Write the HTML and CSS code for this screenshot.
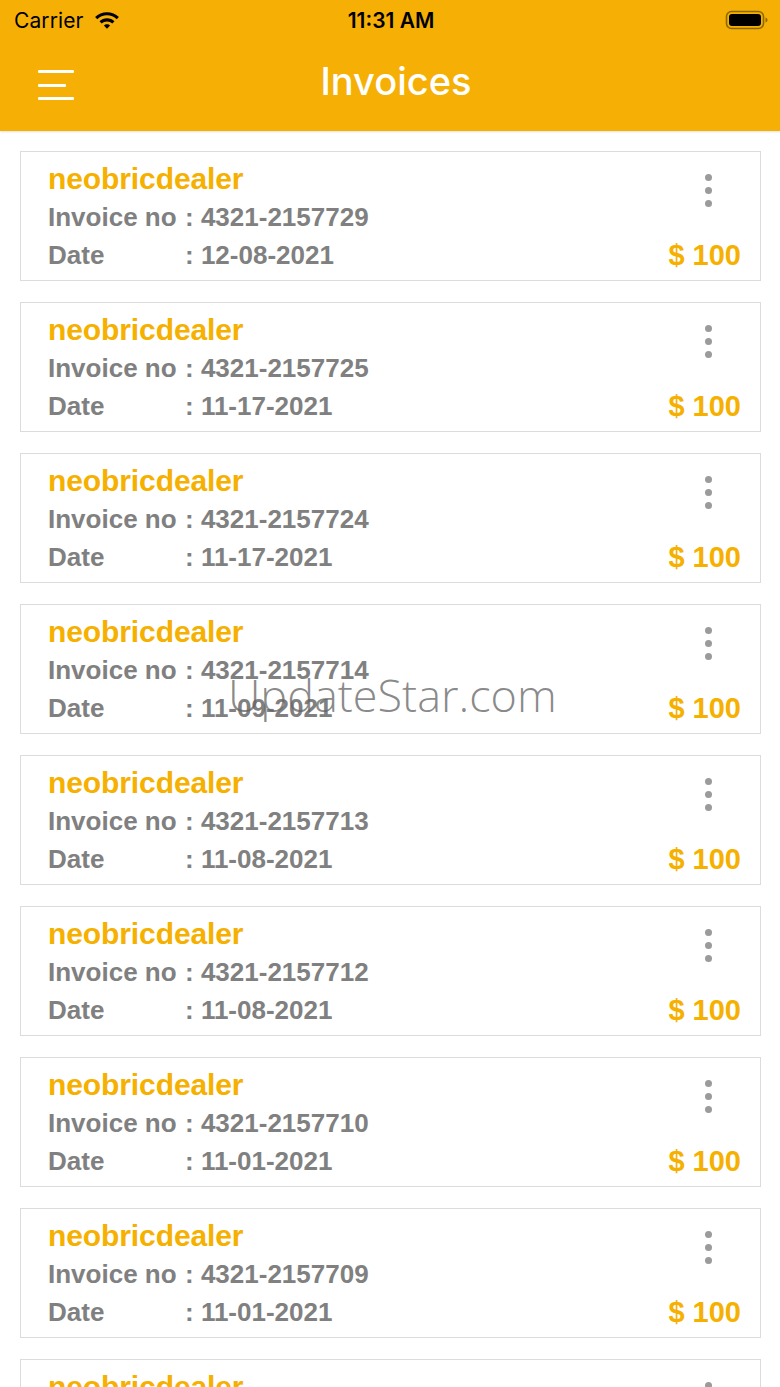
FILE: index.html
```html
<!DOCTYPE html>
<html lang="en">
<head>
<meta charset="utf-8">
<title>Invoices</title>
<link rel="stylesheet" href="styles.css">
</head>
<body>
<div class="screen">
  <header class="topbar">
    <div class="status">
      <div class="status-left">
        <span class="carrier">Carrier</span>
        <svg class="wifi" width="28" height="20" viewBox="0 0 28 20">
          <path d="M14 3.2c4.6 0 8.8 1.8 11.9 4.8l-2.2 2.3C21.2 7.8 17.8 6.3 14 6.3S6.8 7.8 4.3 10.3L2.1 8C5.2 5 9.4 3.2 14 3.2z" fill="#000"/>
          <path d="M14 9.3c2.9 0 5.5 1.1 7.5 3l-2.2 2.3c-1.4-1.3-3.2-2.1-5.3-2.1s-3.9.8-5.3 2.1L6.5 12.3c2-1.9 4.6-3 7.5-3z" fill="#000"/>
          <path d="M14 15.3c1.2 0 2.3.5 3.1 1.2L14 19.7l-3.1-3.2c.8-.7 1.9-1.2 3.1-1.2z" fill="#000"/>
        </svg>
      </div>
      <div class="clock">11:31 AM</div>
      <div class="status-right">
        <svg class="battery" width="44" height="22" viewBox="0 0 44 22">
          <rect x="1.5" y="2.5" width="37" height="17" rx="5" fill="none" stroke="#8a6a00" stroke-width="1.6"/>
          <rect x="4" y="5" width="32" height="12" rx="3" fill="#000"/>
          <path d="M40.5 8.5c1.4.4 2 1.3 2 2.5s-.6 2.1-2 2.5z" fill="#8a6a00"/>
        </svg>
      </div>
    </div>
    <nav class="navbar">
      <button class="menu" aria-label="Menu">
        <span class="bar long"></span>
        <span class="bar short"></span>
        <span class="bar long"></span>
      </button>
      <h1 class="title">Invoices</h1>
    </nav>
  </header>

  <main class="list">
    <div class="card">
      <div class="info">
        <div class="name">neobricdealer</div>
        <div class="row"><span class="label">Invoice no</span><span class="value">: 4321-2157729</span></div>
        <div class="row"><span class="label">Date</span><span class="value">: 12-08-2021</span></div>
      </div>
      <div class="side"><span class="kebab"><i></i><i></i><i></i></span><span class="price">$ 100</span></div>
    </div>
    <div class="card">
      <div class="info">
        <div class="name">neobricdealer</div>
        <div class="row"><span class="label">Invoice no</span><span class="value">: 4321-2157725</span></div>
        <div class="row"><span class="label">Date</span><span class="value">: 11-17-2021</span></div>
      </div>
      <div class="side"><span class="kebab"><i></i><i></i><i></i></span><span class="price">$ 100</span></div>
    </div>
    <div class="card">
      <div class="info">
        <div class="name">neobricdealer</div>
        <div class="row"><span class="label">Invoice no</span><span class="value">: 4321-2157724</span></div>
        <div class="row"><span class="label">Date</span><span class="value">: 11-17-2021</span></div>
      </div>
      <div class="side"><span class="kebab"><i></i><i></i><i></i></span><span class="price">$ 100</span></div>
    </div>
    <div class="card">
      <div class="info">
        <div class="name">neobricdealer</div>
        <div class="row"><span class="label">Invoice no</span><span class="value">: 4321-2157714</span></div>
        <div class="row"><span class="label">Date</span><span class="value">: 11-09-2021</span></div>
      </div>
      <div class="side"><span class="kebab"><i></i><i></i><i></i></span><span class="price">$ 100</span></div>
    </div>
    <div class="card">
      <div class="info">
        <div class="name">neobricdealer</div>
        <div class="row"><span class="label">Invoice no</span><span class="value">: 4321-2157713</span></div>
        <div class="row"><span class="label">Date</span><span class="value">: 11-08-2021</span></div>
      </div>
      <div class="side"><span class="kebab"><i></i><i></i><i></i></span><span class="price">$ 100</span></div>
    </div>
    <div class="card">
      <div class="info">
        <div class="name">neobricdealer</div>
        <div class="row"><span class="label">Invoice no</span><span class="value">: 4321-2157712</span></div>
        <div class="row"><span class="label">Date</span><span class="value">: 11-08-2021</span></div>
      </div>
      <div class="side"><span class="kebab"><i></i><i></i><i></i></span><span class="price">$ 100</span></div>
    </div>
    <div class="card">
      <div class="info">
        <div class="name">neobricdealer</div>
        <div class="row"><span class="label">Invoice no</span><span class="value">: 4321-2157710</span></div>
        <div class="row"><span class="label">Date</span><span class="value">: 11-01-2021</span></div>
      </div>
      <div class="side"><span class="kebab"><i></i><i></i><i></i></span><span class="price">$ 100</span></div>
    </div>
    <div class="card">
      <div class="info">
        <div class="name">neobricdealer</div>
        <div class="row"><span class="label">Invoice no</span><span class="value">: 4321-2157709</span></div>
        <div class="row"><span class="label">Date</span><span class="value">: 11-01-2021</span></div>
      </div>
      <div class="side"><span class="kebab"><i></i><i></i><i></i></span><span class="price">$ 100</span></div>
    </div>
    <div class="card">
      <div class="info">
        <div class="name">neobricdealer</div>
        <div class="row"><span class="label">Invoice no</span><span class="value">: 4321-2157708</span></div>
        <div class="row"><span class="label">Date</span><span class="value">: 10-28-2021</span></div>
      </div>
      <div class="side"><span class="kebab"><i></i><i></i><i></i></span><span class="price">$ 100</span></div>
    </div>
  </main>

  <div class="watermark">UpdateStar.com</div>
</div>
</body>
</html>
```

FILE: styles.css
```css
* { box-sizing: border-box; }

html, body {
  margin: 0;
  padding: 0;
  background: #ffffff;
}

.screen {
  position: relative;
  width: 780px;
  height: 1387px;
  overflow: hidden;
  background: #ffffff;
  font-family: "Liberation Sans", Arial, sans-serif;
}

/* ---------- Top bar ---------- */
.topbar {
  background: #f6b005;
  height: 131px;
  display: flex;
  flex-direction: column;
  box-shadow: 0 1px 2px rgba(0, 0, 0, 0.12);
}

.status {
  height: 40px;
  display: grid;
  grid-template-columns: 1fr auto 1fr;
  align-items: center;
  padding: 0 14px 0 14px;
  font-family: Inter, "Liberation Sans", sans-serif;
  color: #000;
}

.status-left {
  display: flex;
  align-items: center;
  gap: 9px;
}

.carrier {
  font-size: 21px;
  font-weight: 400;
  letter-spacing: 0.1px;
}

.wifi { display: block; margin-top: -3px; }

.clock {
  font-size: 21px;
  font-weight: 600;
  text-align: center;
  padding-left: 2px;
}

.status-right {
  display: flex;
  justify-content: flex-end;
}

.battery { display: block; margin-right: -3px; }

.navbar {
  flex: 1;
  position: relative;
  display: flex;
  align-items: center;
  justify-content: center;
}

.menu {
  position: absolute;
  left: 38px;
  top: 30px;
  width: 36px;
  height: 30px;
  padding: 0;
  border: 0;
  background: transparent;
  display: flex;
  flex-direction: column;
  justify-content: space-between;
  align-items: flex-start;
}

.menu .bar {
  display: block;
  height: 3px;
  border-radius: 1px;
  background: #ffffff;
}

.menu .long { width: 36px; }
.menu .short { width: 28px; }

.title {
  margin: 0 0 10px 0;
  color: #ffffff;
  font-family: Inter, "Liberation Sans", sans-serif;
  font-weight: 500;
  font-size: 38px;
  letter-spacing: 0;
  padding-left: 12px;
}

/* ---------- List ---------- */
.list {
  padding: 20px 19px 0 20px;
  display: flex;
  flex-direction: column;
  gap: 21px;
}

.card {
  height: 130px;
  border: 1px solid #dcdcdc;
  background: #ffffff;
  display: flex;
  justify-content: space-between;
  padding: 8px 19px 8px 27px;
  flex-shrink: 0;
}

.info {
  display: flex;
  flex-direction: column;
}

.name {
  height: 38px;
  line-height: 38px;
  color: #f5b000;
  font-size: 30px;
  font-weight: 700;
  letter-spacing: -0.1px;
}

.row {
  height: 38px;
  line-height: 38px;
  color: #808080;
  font-size: 26px;
  font-weight: 700;
  display: flex;
  white-space: nowrap;
}

.label {
  width: 137px;
  flex-shrink: 0;
}

.side {
  display: flex;
  flex-direction: column;
  align-items: flex-end;
  justify-content: space-between;
}

.kebab {
  display: flex;
  flex-direction: column;
  gap: 6px;
  margin-top: 14px;
  margin-right: 29px;
}

.kebab i {
  display: block;
  width: 7px;
  height: 7px;
  border-radius: 50%;
  background: #9b9b9b;
}

.price {
  height: 38px;
  line-height: 38px;
  color: #f5b000;
  font-size: 29px;
  font-weight: 700;
  position: relative;
  top: 2px;
}

/* ---------- Watermark overlay ---------- */
.watermark {
  position: absolute;
  left: 228px;
  top: 664px;
  font-family: "Open Sans", sans-serif;
  font-weight: 300;
  font-size: 45px;
  color: rgba(100, 100, 100, 0.75);
  pointer-events: none;
  white-space: nowrap;
}
```
